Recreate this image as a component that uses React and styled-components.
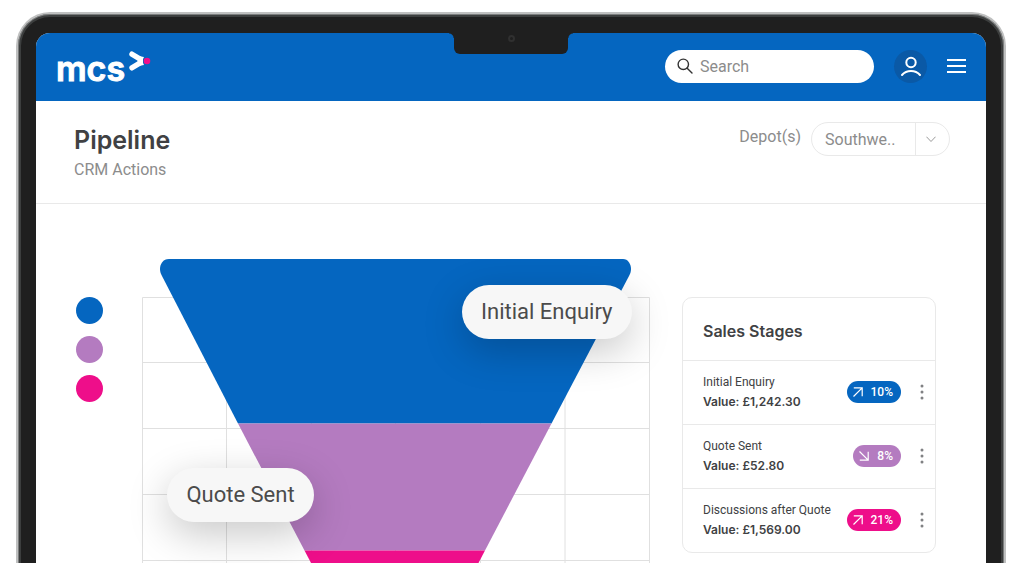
import React from 'react';
import styled, { createGlobalStyle, ThemeProvider } from 'styled-components';

const theme = {
  blue: '#0566c0',
  darkBlue: '#0a59a6',
  purple: '#b47bc0',
  pink: '#ee0e8a',
  bezel: '#1f1f1f',
  line: '#e9e9e9',
  text: '#404143',
  grey: '#8c8c8c',
};

const GlobalStyle = createGlobalStyle`
  *, *::before, *::after {
    box-sizing: border-box;
  }
  body {
    margin: 0;
    background-color: white;
    font-family: Roboto, 'Liberation Sans', sans-serif;
    color: ${theme.text};
  }
  button, input, select {
    font-family: inherit;
  }
  h1, h2, p, ul {
    margin: 0;
    padding: 0;
  }
  h1, h2, strong {
    font-family: Inter, 'Liberation Sans', sans-serif;
  }
`;

const Page = styled.div`
  display: flex;
  height: 100vh;
  padding: 12px 18px 0 16px;
  overflow: hidden;
`;

const Laptop = styled.div`
  flex: 1;
  min-width: 0;
  height: max-content;
  padding: 19px 18px 0;
  border: solid #bfc0c0;
  border-width: 2px 2px 0;
  border-radius: 34px 34px 0 0;
  background-color: ${({ theme }) => theme.bezel};
  box-shadow: inset 0 0 0 1px #7b7d7d, inset 0 0 0 3px #3c3e3e;
`;

const Screen = styled.div`
  position: relative;
  overflow: hidden;
  border-radius: 14px 14px 0 0;
  background-color: white;
`;

const Notch = styled.div`
  position: absolute;
  top: 0;
  left: 50%;
  display: flex;
  justify-content: center;
  width: 114px;
  height: 21px;
  transform: translateX(-50%);
  border-radius: 0 0 6px 6px;
  background-color: ${({ theme }) => theme.bezel};

  &::before,
  &::after {
    content: '';
    position: absolute;
    top: 0;
    width: 5px;
    height: 5px;
  }
  &::before {
    right: 100%;
    background: radial-gradient(circle at 0 100%, transparent 4px, ${({ theme }) => theme.bezel} 5px);
  }
  &::after {
    left: 100%;
    background: radial-gradient(circle at 100% 100%, transparent 4px, ${({ theme }) => theme.bezel} 5px);
  }
`;

const Camera = styled.span`
  width: 7px;
  height: 7px;
  margin-top: 2px;
  border: 2px solid #303030;
  border-radius: 50%;
`;

const Header = styled.header`
  display: flex;
  align-items: center;
  gap: 20px;
  height: 68px;
  padding: 0 20px 2px;
  background-color: ${({ theme }) => theme.blue};
`;

const Logo = styled.a`
  display: flex;
  align-items: center;
  margin-right: auto;
  padding-top: 6px;
  color: white;
  font-family: Inter, sans-serif;
  font-size: 34px;
  font-weight: 600;
  line-height: 40px;
  text-decoration: none;
  -webkit-text-stroke: 1px white;

  > svg {
    margin-bottom: 16px;
  }
`;

const SearchBox = styled.label`
  display: flex;
  align-items: center;
  gap: 7px;
  width: 209px;
  height: 33px;
  padding: 0 12px;
  border-radius: 17px;
  background-color: white;
`;

const SearchInput = styled.input`
  flex: 1;
  min-width: 0;
  padding: 0;
  border: none;
  outline: none;
  background: none;
  font-size: 16px;

  &::placeholder {
    color: ${({ theme }) => theme.grey};
    opacity: 1;
  }
`;

const IconButton = styled.button`
  display: flex;
  align-items: center;
  justify-content: center;
  padding: 0;
  border: none;
  background: none;
  cursor: pointer;
`;

const UserButton = styled(IconButton)`
  width: 33px;
  height: 33px;
  border-radius: 50%;
  background-color: ${({ theme }) => theme.darkBlue};
`;

const TitleBar = styled.div`
  display: flex;
  justify-content: space-between;
  height: 103px;
  padding: 21px 36px 0 38px;
  border-bottom: 1px solid ${({ theme }) => theme.line};
`;

const Title = styled.h1`
  font-size: 25px;
  font-weight: 600;
  line-height: 36px;
`;

const Subtitle = styled.p`
  color: ${({ theme }) => theme.grey};
  font-size: 16px;
  line-height: 24px;
`;

const Depot = styled.div`
  display: flex;
  gap: 10px;
  color: ${({ theme }) => theme.grey};
  font-size: 16px;
  line-height: 30px;
`;

const SelectWrapper = styled.div`
  display: grid;
  grid-template-columns: 1fr 34px;
  width: 139px;
  height: 34px;
  border: 1px solid ${({ theme }) => theme.line};
  border-radius: 17px;

  > select {
    grid-area: 1 / 1 / 2 / 3;
    padding: 0 34px 0 13px;
    border: none;
    outline: none;
    background: none;
    appearance: none;
    color: ${({ theme }) => theme.grey};
    font-size: 16px;
  }
`;

const SelectArrow = styled.span`
  grid-area: 1 / 2;
  display: flex;
  align-items: center;
  justify-content: center;
  padding-right: 4px;
  border-left: 1px solid ${({ theme }) => theme.line};
  pointer-events: none;
`;

const Main = styled.main`
  display: flex;
  align-items: flex-start;
  padding: 55px 50px 40px 40px;
`;

const Legend = styled.ul`
  display: flex;
  flex-direction: column;
  gap: 12px;
  margin: 38px 39px 0 0;
  list-style: none;
`;

const Dot = styled.li`
  width: 27px;
  height: 27px;
  border-radius: 50%;
  background-color: ${({ theme, $color }) => theme[$color]};
`;

const Chart = styled.div`
  position: relative;
  flex: 1;
  min-width: 0;
  margin-right: 32px;

  > svg {
    display: block;
    width: 100%;
  }
`;

const ChartLabel = styled.span`
  position: absolute;
  top: ${({ $top }) => $top};
  left: ${({ $left }) => $left};
  padding: 0 19px;
  border-radius: 27px;
  background-color: #f7f7f7;
  box-shadow: 0 12px 40px rgba(0, 0, 0, 0.22);
  color: #4b4b4b;
  font-size: 22px;
  line-height: 54px;
  white-space: nowrap;
`;

const Card = styled.section`
  width: 254px;
  margin-top: 38px;
  border: 1px solid ${({ theme }) => theme.line};
  border-radius: 10px;
`;

const CardTitle = styled.h2`
  height: 62px;
  padding: 2px 20px 0;
  font-size: 16px;
  font-weight: 600;
  line-height: 62px;
`;

const Stage = styled.li`
  display: flex;
  align-items: center;
  height: 64px;
  padding: 0 7px 2px 20px;
  border-top: 1px solid ${({ theme }) => theme.line};
`;

const StageText = styled.div`
  flex: 1;
  font-size: 12px;
  line-height: 19px;
  white-space: nowrap;

  > strong {
    display: block;
    font-weight: 600;
  }
`;

const Badge = styled.span`
  display: flex;
  align-items: center;
  gap: 8px;
  height: 22px;
  margin-right: 15px;
  padding: 0 8px 0 6px;
  border-radius: 11px;
  background-color: ${({ theme, $color }) => theme[$color]};
  color: white;
  font-size: 12px;
  font-weight: 500;
`;

const stages = [
  { name: 'Initial Enquiry', value: '£1,242.30', change: '10%', color: 'blue', up: true },
  { name: 'Quote Sent', value: '£52.80', change: '8%', color: 'purple', up: false },
  { name: 'Discussions after Quote', value: '£1,569.00', change: '21%', color: 'pink', up: true },
];

const LogoMark = () => (
  <svg width="26" height="24" viewBox="0 0 26 24" fill="none">
    <path d="M7 5.2L14.5 9.8Q16 12 14.5 14.2L7 18.8" stroke="white" strokeWidth="5.4" strokeLinecap="round" />
    <path d="M13 7L19 8Q16.5 12 19 16L13 17Z" fill="white" />
    <circle cx="22" cy="12" r="3.3" fill={theme.pink} />
  </svg>
);

const SearchIcon = () => (
  <svg width="16" height="16" viewBox="0 0 16 16" fill="none" stroke="#333" strokeWidth="1.4" strokeLinecap="round">
    <circle cx="6.3" cy="6.3" r="5.2" />
    <path d="M10.2 10.2L15 15" />
  </svg>
);

const UserIcon = () => (
  <svg width="22" height="22" viewBox="0 0 22 22" fill="none" stroke="white" strokeWidth="2" strokeLinecap="round">
    <circle cx="11" cy="7.5" r="4.7" />
    <path d="M2 20C6.5 14.8 15.5 14.8 20 20" />
  </svg>
);

const MenuIcon = () => (
  <svg width="19" height="16" viewBox="0 0 19 16" stroke="white" strokeWidth="2">
    <path d="M0 2H19M0 8H19M0 14H19" />
  </svg>
);

const ChevronIcon = () => (
  <svg width="10" height="7" viewBox="0 0 10 7" fill="none" stroke="#999" strokeLinecap="round">
    <path d="M0.7 1L5 5.5L9.3 1" />
  </svg>
);

const TrendIcon = ({ up }) => (
  <svg width="10" height="10" viewBox="0 0 10 10" fill="none" stroke="white" strokeWidth="1.2">
    <path d={up ? 'M0.5 9.5L9.2 0.8M0.8 0.8H9.2V9.2' : 'M0.5 0.5L9.2 9.2M0.8 9.2H9.2V0.8'} />
  </svg>
);

const DotsIcon = () => (
  <svg width="12" height="16" viewBox="0 0 12 16" fill="#808183">
    <circle cx="6" cy="2" r="1.5" />
    <circle cx="6" cy="8" r="1.5" />
    <circle cx="6" cy="14" r="1.5" />
  </svg>
);

const Funnel = () => (
  <svg viewBox="0 0 508 500">
    <path
      d="M.5 38.5H507.5V499.5H.5ZM0 103.5H508M0 169.5H508M0 235.5H508M0 301.5H508M0 367.5H508M0 433.5H508M84.5 38V500M169.5 38V500M253.5 38V500M338.5 38V500M423 38V500"
      fill="none"
      stroke="#e0e0e0"
    />
    <path
      d="M27 0H481C486 0 489 5 489 10C489 13 488 15 487 17L409.5 164.5H96L20 17C19 15 18 13 18 10C18 5 21 0 27 0Z"
      fill={theme.blue}
    />
    <path d="M96 164.5H409.5L343 291.5H162.5Z" fill={theme.purple} />
    <path d="M162.5 291.5H343L253 464Z" fill={theme.pink} />
  </svg>
);

const App = () => (
  <ThemeProvider theme={theme}>
    <GlobalStyle />
    <Page>
      <Laptop>
        <Screen>
          <Header>
            <Logo href="#">
              mcs
              <LogoMark />
            </Logo>
            <SearchBox>
              <SearchIcon />
              <SearchInput type="search" placeholder="Search" aria-label="Search" />
            </SearchBox>
            <UserButton aria-label="Account">
              <UserIcon />
            </UserButton>
            <IconButton aria-label="Menu">
              <MenuIcon />
            </IconButton>
          </Header>
          <Notch>
            <Camera />
          </Notch>
          <TitleBar>
            <div>
              <Title>Pipeline</Title>
              <Subtitle>CRM Actions</Subtitle>
            </div>
            <Depot>
              <label htmlFor="depot">Depot(s)</label>
              <SelectWrapper>
                <select id="depot">
                  <option>Southwe..</option>
                </select>
                <SelectArrow>
                  <ChevronIcon />
                </SelectArrow>
              </SelectWrapper>
            </Depot>
          </TitleBar>
          <Main>
            <Legend>
              {stages.map(({ name, color }) => (
                <Dot key={name} $color={color} aria-label={name} />
              ))}
            </Legend>
            <Chart>
              <Funnel />
              <ChartLabel $top="5.2%" $left="63%">
                Initial Enquiry
              </ChartLabel>
              <ChartLabel $top="41.7%" $left="5%">
                Quote Sent
              </ChartLabel>
            </Chart>
            <Card>
              <CardTitle>Sales Stages</CardTitle>
              <ul>
                {stages.map(({ name, value, change, color, up }) => (
                  <Stage key={name}>
                    <StageText>
                      {name}
                      <strong>Value: {value}</strong>
                    </StageText>
                    <Badge $color={color}>
                      <TrendIcon up={up} />
                      {change}
                    </Badge>
                    <IconButton aria-label={`${name} options`}>
                      <DotsIcon />
                    </IconButton>
                  </Stage>
                ))}
              </ul>
            </Card>
          </Main>
        </Screen>
      </Laptop>
    </Page>
  </ThemeProvider>
);

export default App;
